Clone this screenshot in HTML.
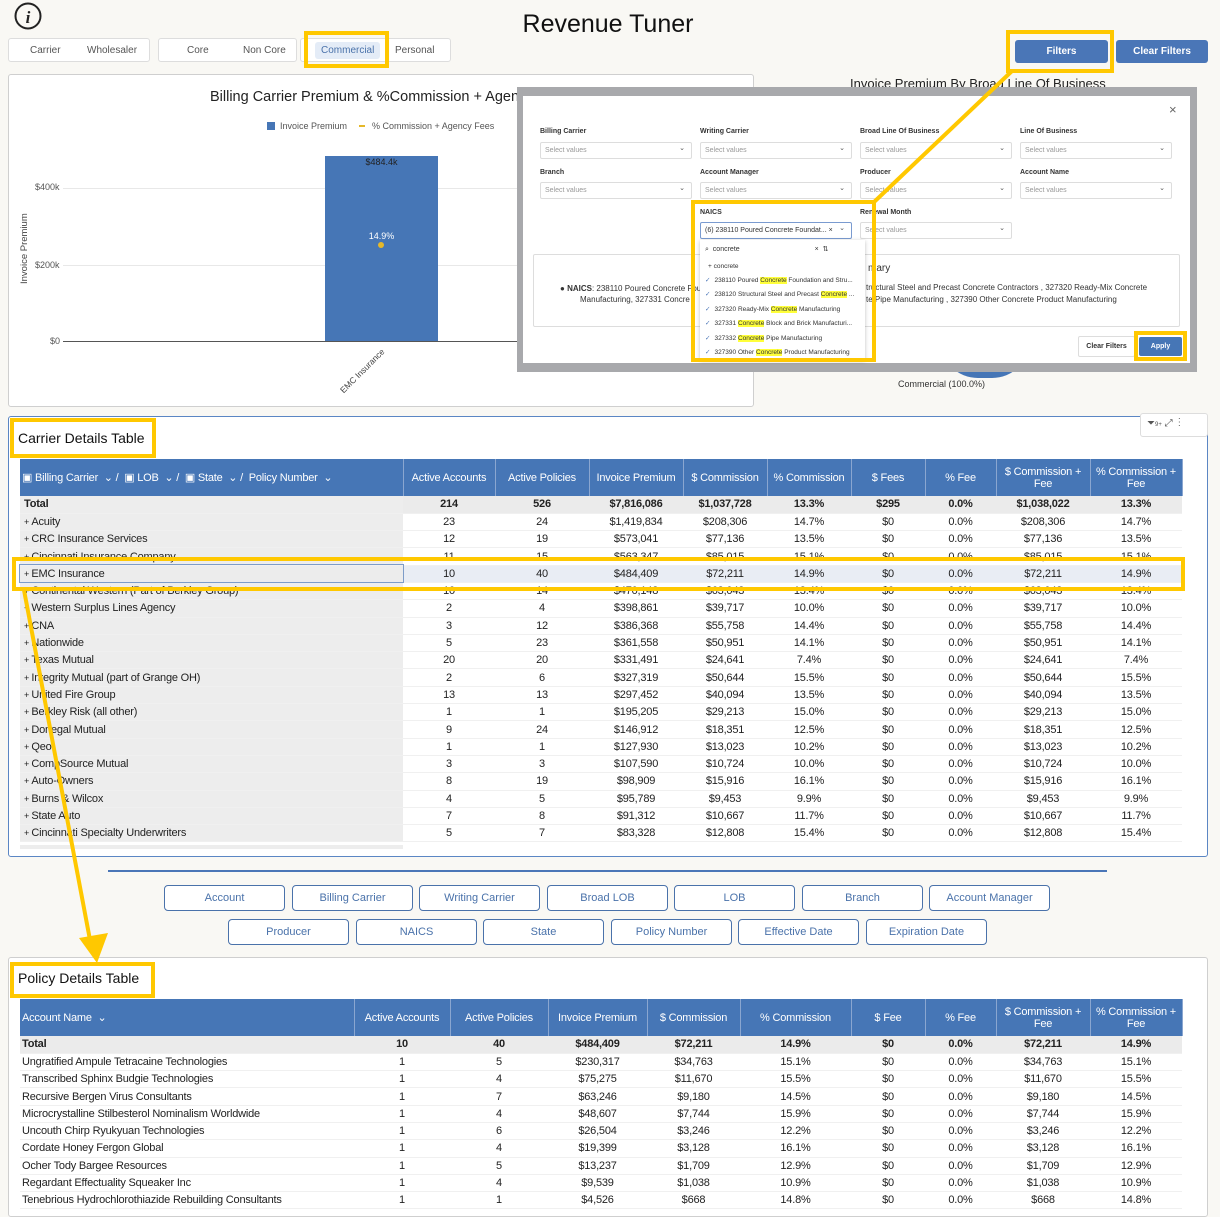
<!DOCTYPE html>
<html><head><meta charset="utf-8">
<style>
*{box-sizing:border-box;margin:0;padding:0}
body{width:1220px;height:1201px;background:#f9f8f4;font-family:"Liberation Sans",sans-serif;position:relative;overflow:hidden;color:#222}
.a{position:absolute}
.card{position:absolute;background:#fff;border:1px solid #cfcfcf;border-radius:3px}
.seg{position:absolute;background:#fff;border:1px solid #ddd;border-radius:3px;height:24px;font-size:10px;color:#555}
.seg span{position:absolute;top:6px}
.btnb{position:absolute;background:#4a76b7;color:#fff;font-size:10px;font-weight:bold;text-align:center;border-radius:3px;height:23px;line-height:23px}
.yb{position:absolute;border:4px solid #ffc800}
table{border-collapse:collapse;table-layout:fixed;position:absolute;font-size:11px;letter-spacing:-0.2px}
th{background:#4676b6;color:#fff;font-weight:normal;border-right:1px solid #8aa6d0;height:37px;line-height:12px;padding:0 2px}
td{height:17.3px;text-align:center;border-bottom:1px solid #f0f0f0;white-space:nowrap;overflow:hidden;padding:0 2px}
td:first-child{text-align:left}
.ct td:first-child{background:#ededed;padding-left:4px}
.ct td:first-child:before{content:"+ ";font-size:9px}
.ct tr.tot td:first-child:before{content:""}
tr.tot td{background:#ebebeb;font-weight:bold}
.pb{position:absolute;border:1px solid #4a72aa;border-radius:4px;background:#fff;color:#4a72aa;font-size:11px;text-align:center;height:26px;line-height:24px;width:121px}
.sel{position:absolute;height:17px;border:1px solid #ddd;border-radius:2px;font-size:7px;color:#999;padding:4px 4px;width:152px;background:#fff}
.sel:after{content:"⌄";position:absolute;right:6px;top:1px;color:#555}
.lbl{position:absolute;font-size:7px;font-weight:bold;color:#333}
.hl{background:#ffff3a}
.dd{position:absolute;font-size:6.5px;color:#333;left:705px}
.dd b{color:#4a76b7;font-weight:normal;margin-right:4px}
</style></head><body>

<svg class="a" style="left:13px;top:1px" width="30" height="30"><circle cx="15" cy="15" r="12.5" fill="none" stroke="#222" stroke-width="2"/><text x="15" y="22" font-size="17" font-style="italic" font-family="Liberation Serif" font-weight="bold" text-anchor="middle" fill="#222">i</text></svg>
<div class="a" style="left:0;width:1216px;top:10px;text-align:center;font-size:25px;color:#111">Revenue Tuner</div>

<div class="seg" style="left:8px;top:38px;width:142px"><span style="left:21px">Carrier</span><span style="left:78px">Wholesaler</span></div>
<div class="seg" style="left:158px;top:38px;width:139px"><span style="left:28px">Core</span><span style="left:84px">Non Core</span></div>
<div class="seg" style="left:300px;top:38px;width:151px"><span style="left:14px;top:3px;background:#e4ecf7;color:#4a72aa;padding:3px 6px;border-radius:3px">Commercial</span><span style="left:94px">Personal</span></div>
<div class="yb" style="left:304px;top:31px;width:85px;height:37px"></div>

<div class="btnb" style="left:1015px;top:40px;width:93px">Filters</div>
<div class="btnb" style="left:1116px;top:40px;width:92px">Clear Filters</div>
<div class="yb" style="left:1006px;top:30px;width:108px;height:43px"></div>

<div class="card" style="left:8px;top:74px;width:746px;height:333px"></div>
<div class="a" style="left:210px;top:89px;font-size:14.5px;color:#222">Billing Carrier Premium &amp; %Commission + Agency</div>
<div class="a" style="left:267px;top:122px;width:8px;height:8px;background:#4676b6"></div>
<div class="a" style="left:280px;top:121px;font-size:9px;color:#555">Invoice Premium</div>
<div class="a" style="left:359px;top:125px;width:6px;height:2px;background:#e5b82a"></div>
<div class="a" style="left:372px;top:121px;font-size:9px;color:#555">% Commission + Agency Fees</div>
<div class="a" style="left:19px;top:284px;font-size:9.5px;color:#444;transform:rotate(-90deg);transform-origin:0 0">Invoice Premium</div>
<div class="a" style="left:35px;top:182px;font-size:9px;color:#555">$400k</div>
<div class="a" style="left:35px;top:260px;font-size:9px;color:#555">$200k</div>
<div class="a" style="left:50px;top:336px;font-size:9px;color:#555">$0</div>
<div class="a" style="left:63px;top:188px;width:460px;height:1px;background:#e8e8e8"></div>
<div class="a" style="left:63px;top:265px;width:460px;height:1px;background:#e8e8e8"></div>
<div class="a" style="left:63px;top:341px;width:460px;height:1px;background:#555"></div>
<div class="a" style="left:325px;top:156px;width:113px;height:185px;background:#4676b6"></div>
<div class="a" style="left:325px;top:157px;width:113px;text-align:center;font-size:9px">$484.4k</div>
<div class="a" style="left:325px;top:231px;width:113px;text-align:center;font-size:9px;color:#fff">14.9%</div>
<div class="a" style="left:378px;top:242px;width:6px;height:6px;border-radius:50%;background:#e5b82a"></div>
<div class="a" style="left:338px;top:388px;font-size:8.5px;color:#444;transform:rotate(-45deg);transform-origin:0 0">EMC Insurance</div>

<div class="a" style="left:850px;top:76px;font-size:13px;color:#222">Invoice Premium By Broad Line Of Business</div>
<div class="a" style="left:940px;top:340px;width:90px;height:38px;border-radius:0 0 45px 45px;background:#4676b6"></div>
<div class="a" style="left:898px;top:379px;font-size:9px;color:#333">Commercial (100.0%)</div>

<div class="a" style="left:517px;top:87px;width:680px;height:285px;background:#a8a9ac"></div>
<div class="a" style="left:523px;top:96px;width:667px;height:267px;background:#fff"></div>
<div class="a" style="left:1169px;top:102px;font-size:13px;color:#666">×</div>
<div class="lbl" style="left:540px;top:128px">Billing Carrier</div>
<div class="lbl" style="left:700px;top:128px">Writing Carrier</div>
<div class="lbl" style="left:860px;top:128px">Broad Line Of Business</div>
<div class="lbl" style="left:1020px;top:128px">Line Of Business</div>
<div class="sel" style="left:540px;top:142px">Select values</div>
<div class="sel" style="left:700px;top:142px">Select values</div>
<div class="sel" style="left:860px;top:142px">Select values</div>
<div class="sel" style="left:1020px;top:142px">Select values</div>
<div class="lbl" style="left:540px;top:169px">Branch</div>
<div class="lbl" style="left:700px;top:169px">Account Manager</div>
<div class="lbl" style="left:860px;top:169px">Producer</div>
<div class="lbl" style="left:1020px;top:169px">Account Name</div>
<div class="sel" style="left:540px;top:182px">Select values</div>
<div class="sel" style="left:700px;top:182px">Select values</div>
<div class="sel" style="left:860px;top:182px">Select values</div>
<div class="sel" style="left:1020px;top:182px">Select values</div>
<div class="lbl" style="left:700px;top:209px">NAICS</div>
<div class="lbl" style="left:860px;top:209px">Renewal Month</div>
<div class="sel" style="left:700px;top:222px;border-color:#7a9bd0;color:#333">(6) 238110 Poured Concrete Foundat... ×</div>
<div class="sel" style="left:860px;top:222px">Select values</div>
<div class="a" style="left:533px;top:254px;width:647px;height:73px;border:1px solid #ddd;border-radius:2px"></div>
<div class="a" style="left:868px;top:263px;font-size:10px;color:#333">mary</div>
<div class="a" style="left:560px;top:283px;font-size:8px;color:#333;line-height:12px">● <b>NAICS</b>: 238110 Poured Concrete Fou</div>
<div class="a" style="left:580px;top:295px;font-size:8px;color:#333">Manufacturing, 327331 Concre</div>
<div class="a" style="left:866px;top:283px;font-size:8px;color:#333">tructural Steel and Precast Concrete Contractors , 327320 Ready-Mix Concrete</div>
<div class="a" style="left:866px;top:295px;font-size:8px;color:#333">te Pipe Manufacturing , 327390 Other Concrete Product Manufacturing</div>
<div class="a" style="left:700px;top:240px;width:165px;height:120px;background:#fff;box-shadow:0 1px 4px rgba(0,0,0,.25)"></div>
<div class="a" style="left:705px;top:245px;font-size:7px;color:#333">⌕&nbsp; concrete<span style="margin-left:75px">× &nbsp;⇅</span></div>
<div class="dd" style="top:263px;left:708px">+ concrete</div>
<div class="dd" style="top:276px"><b>✓</b>238110 Poured <span class="hl">Concrete</span> Foundation and Stru...</div>
<div class="dd" style="top:290px"><b>✓</b>238120 Structural Steel and Precast <span class="hl">Concrete</span> ...</div>
<div class="dd" style="top:305px"><b>✓</b>327320 Ready-Mix <span class="hl">Concrete</span> Manufacturing</div>
<div class="dd" style="top:319px"><b>✓</b>327331 <span class="hl">Concrete</span> Block and Brick Manufacturi...</div>
<div class="dd" style="top:334px"><b>✓</b>327332 <span class="hl">Concrete</span> Pipe Manufacturing</div>
<div class="dd" style="top:348px"><b>✓</b>327390 Other <span class="hl">Concrete</span> Product Manufacturing</div>
<div class="a" style="left:1078px;top:336px;width:57px;height:21px;border:1px solid #ddd;border-radius:2px;font-size:7px;font-weight:bold;text-align:center;line-height:19px;color:#333">Clear Filters</div>
<div class="a" style="left:1139px;top:337px;width:43px;height:19px;background:#4676b6;border-radius:2px;font-size:7px;font-weight:bold;text-align:center;line-height:19px;color:#fff">Apply</div>
<div class="yb" style="left:691px;top:200px;width:185px;height:162px"></div>
<div class="yb" style="left:1134px;top:331px;width:53px;height:30px"></div>

<div class="card" style="left:8px;top:416px;width:1200px;height:441px;border-color:#5b86c4"></div>
<div class="a" style="left:1140px;top:413px;width:68px;height:24px;background:#fff;border:1px solid #ddd;border-radius:3px;font-size:10px;color:#555;padding:4px 6px">⏷<span style="font-size:6px">9+</span> ⤢ &nbsp;⋮</div>
<div class="a" style="left:18px;top:430px;font-size:14px;color:#111">Carrier Details Table</div>
<div class="yb" style="left:10px;top:418px;width:146px;height:40px"></div>

<table class="ct" style="left:20px;top:459px;width:1162px">
<colgroup><col style="width:383px"><col style="width:92px"><col style="width:94px"><col style="width:94px"><col style="width:84px"><col style="width:84px"><col style="width:74px"><col style="width:71px"><col style="width:94px"><col style="width:92px"></colgroup>
<tr><th style="text-align:left;padding-left:2px">▣ Billing Carrier &nbsp;⌄ / &nbsp;▣ LOB &nbsp;⌄ / &nbsp;▣ State &nbsp;⌄ / &nbsp;Policy Number &nbsp;⌄</th><th>Active Accounts</th><th>Active Policies</th><th>Invoice Premium</th><th>$ Commission</th><th>% Commission</th><th>$ Fees</th><th>% Fee</th><th>$ Commission + Fee</th><th>% Commission + Fee</th></tr>
<tr class="tot"><td>Total</td><td>214</td><td>526</td><td>$7,816,086</td><td>$1,037,728</td><td>13.3%</td><td>$295</td><td>0.0%</td><td>$1,038,022</td><td>13.3%</td></tr>
<tr><td>Acuity</td><td>23</td><td>24</td><td>$1,419,834</td><td>$208,306</td><td>14.7%</td><td>$0</td><td>0.0%</td><td>$208,306</td><td>14.7%</td></tr>
<tr><td>CRC Insurance Services</td><td>12</td><td>19</td><td>$573,041</td><td>$77,136</td><td>13.5%</td><td>$0</td><td>0.0%</td><td>$77,136</td><td>13.5%</td></tr>
<tr><td>Cincinnati Insurance Company</td><td>11</td><td>15</td><td>$563,347</td><td>$85,015</td><td>15.1%</td><td>$0</td><td>0.0%</td><td>$85,015</td><td>15.1%</td></tr>
<tr><td style="background:#ececec;outline:1px solid #7d9cc8">EMC Insurance</td><td style="background:#e9edf4">10</td><td style="background:#e9edf4">40</td><td style="background:#e9edf4">$484,409</td><td style="background:#e9edf4">$72,211</td><td style="background:#e9edf4">14.9%</td><td style="background:#e9edf4">$0</td><td style="background:#e9edf4">0.0%</td><td style="background:#e9edf4">$72,211</td><td style="background:#e9edf4">14.9%</td></tr>
<tr><td>Continental Western (Part of Berkley Group)</td><td>10</td><td>14</td><td>$470,148</td><td>$63,043</td><td>13.4%</td><td>$0</td><td>0.0%</td><td>$63,043</td><td>13.4%</td></tr>
<tr><td>Western Surplus Lines Agency</td><td>2</td><td>4</td><td>$398,861</td><td>$39,717</td><td>10.0%</td><td>$0</td><td>0.0%</td><td>$39,717</td><td>10.0%</td></tr>
<tr><td>CNA</td><td>3</td><td>12</td><td>$386,368</td><td>$55,758</td><td>14.4%</td><td>$0</td><td>0.0%</td><td>$55,758</td><td>14.4%</td></tr>
<tr><td>Nationwide</td><td>5</td><td>23</td><td>$361,558</td><td>$50,951</td><td>14.1%</td><td>$0</td><td>0.0%</td><td>$50,951</td><td>14.1%</td></tr>
<tr><td>Texas Mutual</td><td>20</td><td>20</td><td>$331,491</td><td>$24,641</td><td>7.4%</td><td>$0</td><td>0.0%</td><td>$24,641</td><td>7.4%</td></tr>
<tr><td>Integrity Mutual (part of Grange OH)</td><td>2</td><td>6</td><td>$327,319</td><td>$50,644</td><td>15.5%</td><td>$0</td><td>0.0%</td><td>$50,644</td><td>15.5%</td></tr>
<tr><td>United Fire Group</td><td>13</td><td>13</td><td>$297,452</td><td>$40,094</td><td>13.5%</td><td>$0</td><td>0.0%</td><td>$40,094</td><td>13.5%</td></tr>
<tr><td>Berkley Risk (all other)</td><td>1</td><td>1</td><td>$195,205</td><td>$29,213</td><td>15.0%</td><td>$0</td><td>0.0%</td><td>$29,213</td><td>15.0%</td></tr>
<tr><td>Donegal Mutual</td><td>9</td><td>24</td><td>$146,912</td><td>$18,351</td><td>12.5%</td><td>$0</td><td>0.0%</td><td>$18,351</td><td>12.5%</td></tr>
<tr><td>Qeo</td><td>1</td><td>1</td><td>$127,930</td><td>$13,023</td><td>10.2%</td><td>$0</td><td>0.0%</td><td>$13,023</td><td>10.2%</td></tr>
<tr><td>CompSource Mutual</td><td>3</td><td>3</td><td>$107,590</td><td>$10,724</td><td>10.0%</td><td>$0</td><td>0.0%</td><td>$10,724</td><td>10.0%</td></tr>
<tr><td>Auto-Owners</td><td>8</td><td>19</td><td>$98,909</td><td>$15,916</td><td>16.1%</td><td>$0</td><td>0.0%</td><td>$15,916</td><td>16.1%</td></tr>
<tr><td>Burns &amp; Wilcox</td><td>4</td><td>5</td><td>$95,789</td><td>$9,453</td><td>9.9%</td><td>$0</td><td>0.0%</td><td>$9,453</td><td>9.9%</td></tr>
<tr><td>State Auto</td><td>7</td><td>8</td><td>$91,312</td><td>$10,667</td><td>11.7%</td><td>$0</td><td>0.0%</td><td>$10,667</td><td>11.7%</td></tr>
<tr><td>Cincinnati Specialty Underwriters</td><td>5</td><td>7</td><td>$83,328</td><td>$12,808</td><td>15.4%</td><td>$0</td><td>0.0%</td><td>$12,808</td><td>15.4%</td></tr>
</table>
<div class="a" style="left:20px;top:845px;width:383px;height:4px;background:#ededed"></div>
<div class="yb" style="left:12px;top:557px;width:1173px;height:34px"></div>

<div class="a" style="left:108px;top:870px;width:999px;height:2px;background:#4a76b7"></div>
<div class="pb" style="left:164px;top:885px">Account</div>
<div class="pb" style="left:292px;top:885px">Billing Carrier</div>
<div class="pb" style="left:419px;top:885px">Writing Carrier</div>
<div class="pb" style="left:547px;top:885px">Broad LOB</div>
<div class="pb" style="left:674px;top:885px">LOB</div>
<div class="pb" style="left:802px;top:885px">Branch</div>
<div class="pb" style="left:929px;top:885px">Account Manager</div>
<div class="pb" style="left:228px;top:919px">Producer</div>
<div class="pb" style="left:356px;top:919px">NAICS</div>
<div class="pb" style="left:483px;top:919px">State</div>
<div class="pb" style="left:611px;top:919px">Policy Number</div>
<div class="pb" style="left:738px;top:919px">Effective Date</div>
<div class="pb" style="left:866px;top:919px">Expiration Date</div>

<div class="card" style="left:8px;top:957px;width:1200px;height:260px"></div>
<div class="a" style="left:18px;top:970px;font-size:14px;color:#111">Policy Details Table</div>
<div class="yb" style="left:10px;top:962px;width:145px;height:36px"></div>
<table style="left:20px;top:999px;width:1162px">
<colgroup><col style="width:334px"><col style="width:96px"><col style="width:98px"><col style="width:99px"><col style="width:93px"><col style="width:111px"><col style="width:74px"><col style="width:71px"><col style="width:94px"><col style="width:92px"></colgroup>
<tr><th style="text-align:left">Account Name &nbsp;⌄</th><th>Active Accounts</th><th>Active Policies</th><th>Invoice Premium</th><th>$ Commission</th><th>% Commission</th><th>$ Fee</th><th>% Fee</th><th>$ Commission + Fee</th><th>% Commission + Fee</th></tr>
<tr class="tot"><td>Total</td><td>10</td><td>40</td><td>$484,409</td><td>$72,211</td><td>14.9%</td><td>$0</td><td>0.0%</td><td>$72,211</td><td>14.9%</td></tr>
<tr><td>Ungratified Ampule Tetracaine Technologies</td><td>1</td><td>5</td><td>$230,317</td><td>$34,763</td><td>15.1%</td><td>$0</td><td>0.0%</td><td>$34,763</td><td>15.1%</td></tr>
<tr><td>Transcribed Sphinx Budgie Technologies</td><td>1</td><td>4</td><td>$75,275</td><td>$11,670</td><td>15.5%</td><td>$0</td><td>0.0%</td><td>$11,670</td><td>15.5%</td></tr>
<tr><td>Recursive Bergen Virus Consultants</td><td>1</td><td>7</td><td>$63,246</td><td>$9,180</td><td>14.5%</td><td>$0</td><td>0.0%</td><td>$9,180</td><td>14.5%</td></tr>
<tr><td>Microcrystalline Stilbesterol Nominalism Worldwide</td><td>1</td><td>4</td><td>$48,607</td><td>$7,744</td><td>15.9%</td><td>$0</td><td>0.0%</td><td>$7,744</td><td>15.9%</td></tr>
<tr><td>Uncouth Chirp Ryukyuan Technologies</td><td>1</td><td>6</td><td>$26,504</td><td>$3,246</td><td>12.2%</td><td>$0</td><td>0.0%</td><td>$3,246</td><td>12.2%</td></tr>
<tr><td>Cordate Honey Fergon Global</td><td>1</td><td>4</td><td>$19,399</td><td>$3,128</td><td>16.1%</td><td>$0</td><td>0.0%</td><td>$3,128</td><td>16.1%</td></tr>
<tr><td>Ocher Tody Bargee Resources</td><td>1</td><td>5</td><td>$13,237</td><td>$1,709</td><td>12.9%</td><td>$0</td><td>0.0%</td><td>$1,709</td><td>12.9%</td></tr>
<tr><td>Regardant Effectuality Squeaker Inc</td><td>1</td><td>4</td><td>$9,539</td><td>$1,038</td><td>10.9%</td><td>$0</td><td>0.0%</td><td>$1,038</td><td>10.9%</td></tr>
<tr><td>Tenebrious Hydrochlorothiazide Rebuilding Consultants</td><td>1</td><td>1</td><td>$4,526</td><td>$668</td><td>14.8%</td><td>$0</td><td>0.0%</td><td>$668</td><td>14.8%</td></tr>
</table>

<svg class="a" style="left:0;top:0" width="1220" height="1201">
<line x1="1012" y1="71" x2="873" y2="203" stroke="#ffc800" stroke-width="4"/>
<line x1="24" y1="590" x2="90" y2="940" stroke="#ffc800" stroke-width="4"/>
<polygon points="79,938 108,933 97,963" fill="#ffc800"/>
</svg>
</body></html>
